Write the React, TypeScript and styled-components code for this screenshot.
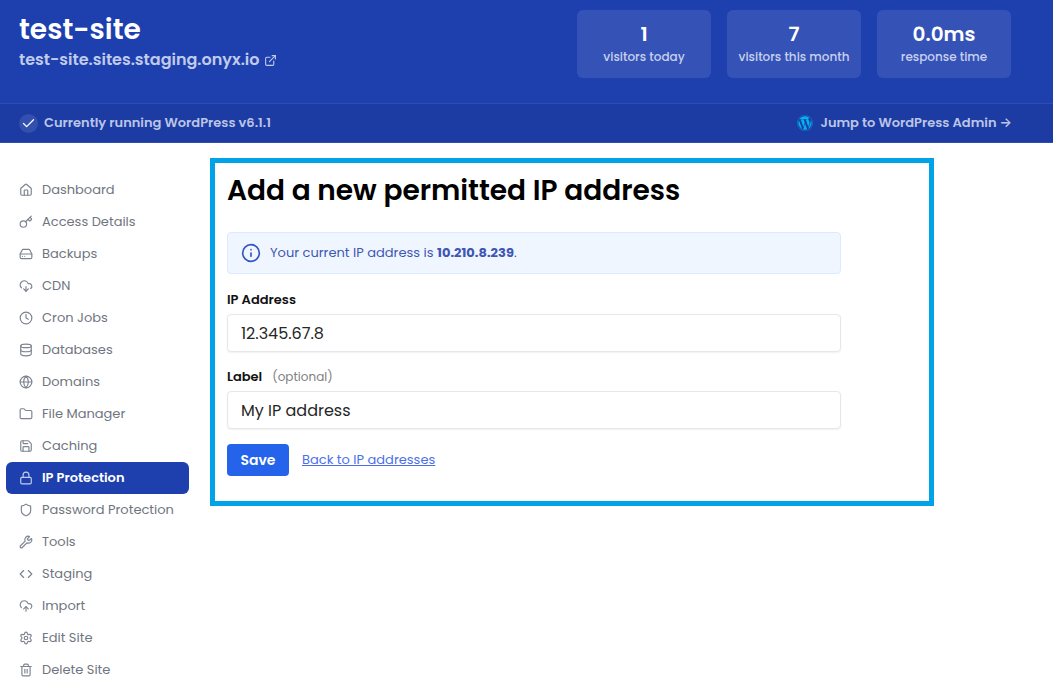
import React from "react";
import styled, { createGlobalStyle, css } from "styled-components";
import {
  Check,
  Clock,
  CloudDownload,
  CloudUpload,
  Code,
  Database,
  ExternalLink,
  Folder,
  Globe,
  HardDrive,
  House,
  Info,
  Key,
  Lock,
  Save,
  Settings,
  Shield,
  Trash2,
  Wrench,
  type LucideIcon,
} from "lucide-react";
import { FaWordpress } from "react-icons/fa";

const GlobalStyle = createGlobalStyle`
  *, *::before, *::after { box-sizing: border-box; }
  body {
    margin: 0;
    background: #fff;
    color: #111;
    font-family: Poppins, Inter, sans-serif;
    font-size: 14px;
    line-height: 20px;
  }
  h1, h2, p, ul, dl, dd { margin: 0; padding: 0; }
  ul { list-style: none; }
`;

const Header = styled.header`
  background: #1e40af;
  color: #fff;
`;

const HeaderTop = styled.div`
  display: flex;
  justify-content: space-between;
  align-items: flex-start;
  padding: 10px 42px 25px 19px;
`;

const SiteName = styled.h1`
  font-size: 28px;
  font-weight: 600;
  line-height: 40px;
`;

const SiteLink = styled.a`
  display: flex;
  align-items: center;
  gap: 5px;
  color: #c0cbea;
  font-size: 16px;
  font-weight: 600;
  line-height: 20px;
  text-decoration: none;
`;

const Stats = styled.dl`
  display: flex;
  gap: 16px;
`;

const Stat = styled.div`
  display: flex;
  flex-direction: column-reverse;
  justify-content: center;
  width: 134px;
  height: 68px;
  border-radius: 6px;
  background: #3553b7;
  text-align: center;
`;

const StatValue = styled.dd`
  font-size: 20px;
  font-weight: 600;
  line-height: 26px;
`;

const StatLabel = styled.dt`
  color: #c8d0ed;
  font-size: 12px;
  font-weight: 500;
  line-height: 20px;
`;

const StatusBar = styled.div`
  display: flex;
  justify-content: space-between;
  align-items: center;
  height: 40px;
  padding: 0 41px 0 19px;
  border-top: 1px solid #2d4db5;
  border-bottom: 1px solid #2d4db5;
  background: #1c3ba3;
  color: #bbc5e6;
  font-size: 13px;
  font-weight: 600;
`;

const Status = styled.p`
  display: flex;
  align-items: center;
  gap: 6px;
`;

const StatusMark = styled.span`
  display: grid;
  place-items: center;
  width: 19px;
  height: 19px;
  border-radius: 50%;
  background: #3350ae;
  color: #fff;
`;

const AdminLink = styled.a`
  display: flex;
  align-items: center;
  gap: 7px;
  color: inherit;
  text-decoration: none;
`;

const Body = styled.div`
  display: flex;
  align-items: flex-start;
  gap: 21px;
  padding: 15px 16px 0 6px;
`;

const Nav = styled.nav`
  flex: none;
  width: 183px;
  padding-top: 16px;
`;

const NavLink = styled.a<{ $active: boolean }>`
  display: flex;
  align-items: center;
  gap: 9px;
  height: 32px;
  padding: 0 13px;
  border-radius: 6px;
  color: #6f7580;
  font-size: 13px;
  text-decoration: none;
  svg { color: #7d838f; }
  ${(p) =>
    p.$active &&
    css`
      background: #1e40af;
      color: #fff;
      font-weight: 600;
      svg { color: #c3cdec; }
    `}
`;

const Panel = styled.main`
  flex: 1;
  max-width: 724px;
  padding: 8px 12px 25px;
  border: 5px solid #00a2e8;
`;

const Title = styled.h2`
  color: #000;
  font-size: 28px;
  font-weight: 600;
  line-height: 40px;
`;

const Form = styled.form`
  max-width: 614px;
`;

const Notice = styled.p`
  display: flex;
  align-items: center;
  gap: 9px;
  height: 42px;
  margin: 21px 0 16px;
  padding: 0 13px;
  border: 1px solid #dbeafe;
  border-radius: 4px;
  background: #eff6ff;
  color: #3f56b4;
  font-size: 13px;
  svg { color: #3556c0; }
`;

const Field = styled.div`
  margin-bottom: 15px;
`;

const FieldLabel = styled.label`
  display: block;
  margin-bottom: 4px;
  font-size: 13px;
  font-weight: 600;
`;

const Optional = styled.span`
  margin-left: 10px;
  color: #808080;
  font-size: 12px;
  font-weight: 400;
`;

const Input = styled.input`
  display: block;
  width: 100%;
  height: 38px;
  padding: 0 13px;
  border: 1px solid #e5e7eb;
  border-radius: 4px;
  background: #fff;
  box-shadow: 0 1px 2px rgba(0, 0, 0, 0.06);
  color: #262626;
  font: inherit;
  font-size: 16px;
`;

const Actions = styled.div`
  display: flex;
  align-items: center;
  gap: 13px;
`;

const SaveButton = styled.button`
  width: 62px;
  height: 32px;
  padding: 0;
  border: 0;
  border-radius: 4px;
  background: #2563eb;
  color: #fff;
  font: inherit;
  font-weight: 600;
`;

const BackLink = styled.a`
  color: #4a6fe8;
  font-size: 13px;
`;

const stats = [
  { value: "1", label: "visitors today" },
  { value: "7", label: "visitors this month" },
  { value: "0.0ms", label: "response time" },
];

const navItems: { label: string; icon: LucideIcon }[] = [
  { label: "Dashboard", icon: House },
  { label: "Access Details", icon: Key },
  { label: "Backups", icon: HardDrive },
  { label: "CDN", icon: CloudDownload },
  { label: "Cron Jobs", icon: Clock },
  { label: "Databases", icon: Database },
  { label: "Domains", icon: Globe },
  { label: "File Manager", icon: Folder },
  { label: "Caching", icon: Save },
  { label: "IP Protection", icon: Lock },
  { label: "Password Protection", icon: Shield },
  { label: "Tools", icon: Wrench },
  { label: "Staging", icon: Code },
  { label: "Import", icon: CloudUpload },
  { label: "Edit Site", icon: Settings },
  { label: "Delete Site", icon: Trash2 },
];

export default function App() {
  return (
    <>
      <GlobalStyle />
      <Header>
        <HeaderTop>
          <div>
            <SiteName>test-site</SiteName>
            <SiteLink href="#site">
              test-site.sites.staging.onyx.io
              <ExternalLink size={13} strokeWidth={2} />
            </SiteLink>
          </div>
          <Stats>
            {stats.map((s) => (
              <Stat key={s.label}>
                <StatLabel>{s.label}</StatLabel>
                <StatValue>{s.value}</StatValue>
              </Stat>
            ))}
          </Stats>
        </HeaderTop>
        <StatusBar>
          <Status>
            <StatusMark>
              <Check size={15} strokeWidth={2} />
            </StatusMark>
            Currently running WordPress v6.1.1
          </Status>
          <AdminLink href="#admin">
            <FaWordpress size={16} color="#00b4f0" />
            Jump to WordPress Admin →
          </AdminLink>
        </StatusBar>
      </Header>
      <Body>
        <Nav aria-label="Site">
          <ul>
            {navItems.map(({ label, icon: Icon }) => (
              <li key={label}>
                <NavLink href="#" $active={label === "IP Protection"}>
                  <Icon size={14} strokeWidth={2} />
                  {label}
                </NavLink>
              </li>
            ))}
          </ul>
        </Nav>
        <Panel>
          <Title>Add a new permitted IP address</Title>
          <Form onSubmit={(e) => e.preventDefault()}>
            <Notice>
              <Info size={20} strokeWidth={2} />
              <span>
                Your current IP address is <strong>10.210.8.239</strong>.
              </span>
            </Notice>
            <Field>
              <FieldLabel htmlFor="ip">IP Address</FieldLabel>
              <Input id="ip" defaultValue="12.345.67.8" />
            </Field>
            <Field>
              <FieldLabel htmlFor="label">
                Label<Optional>(optional)</Optional>
              </FieldLabel>
              <Input id="label" defaultValue="My IP address" />
            </Field>
            <Actions>
              <SaveButton type="submit">Save</SaveButton>
              <BackLink href="#addresses">Back to IP addresses</BackLink>
            </Actions>
          </Form>
        </Panel>
      </Body>
    </>
  );
}
